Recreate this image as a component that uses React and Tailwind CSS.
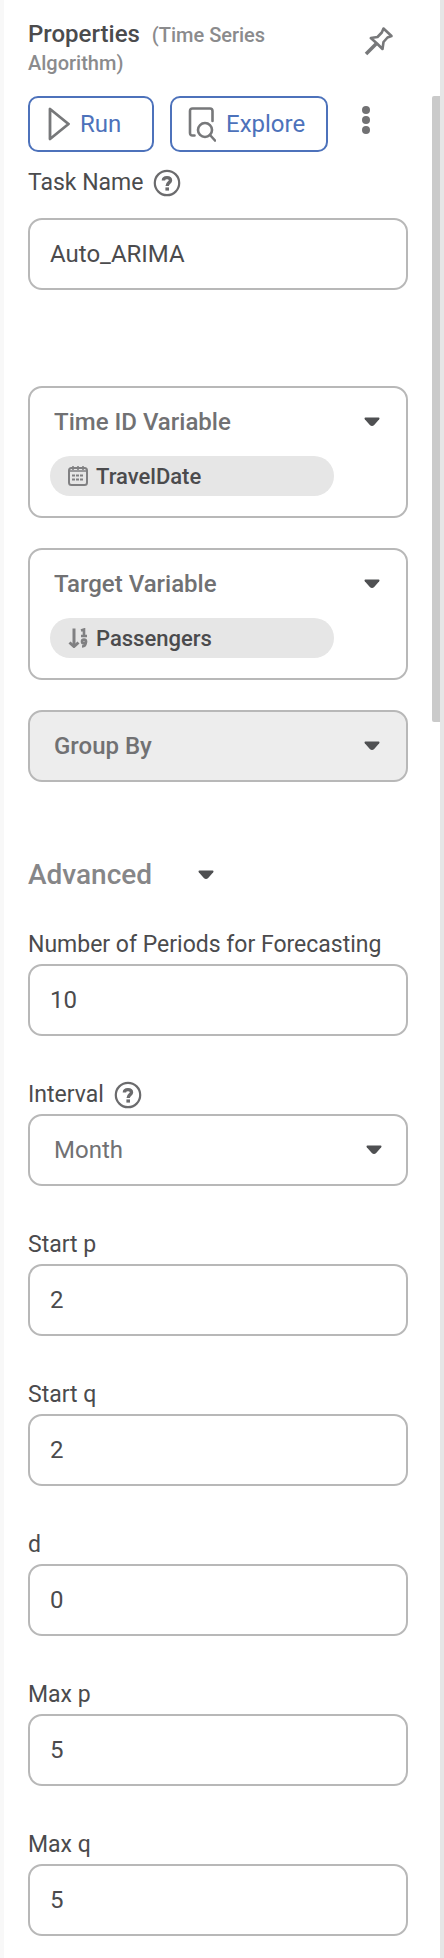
import React, { useState } from "react";

function Caret({ className = "" }) {
  return (
    <svg viewBox="0 0 16 10" className={"pointer-events-none h-[10px] w-4 shrink-0 fill-[#4f5052] " + className} aria-hidden="true">
      <path d="M1.4 0.5H14.6Q16 0.9 15.2 2.2L10.4 7.8Q8 10.2 5.6 7.8L0.8 2.2Q0 0.9 1.4 0.5Z" />
    </svg>
  );
}

function HelpIcon() {
  return (
    <svg viewBox="0 0 28 28" className="size-7 shrink-0" fill="none" stroke="#6b6b6d" aria-hidden="true">
      <circle cx="14" cy="14" r="12.2" strokeWidth="2.2" />
      <path d="M10.4 11.4C10.4 9.4 12 8.6 14 8.6C16.2 8.6 17.5 9.8 17.5 11.4C17.5 13.8 14.2 13.6 14.2 17" strokeWidth="3.4" />
      <path d="M14.2 18.4V21.6" strokeWidth="3.6" />
    </svg>
  );
}

function PinIcon() {
  return (
    <svg viewBox="0 0 30 30" className="size-[30px]" fill="none" stroke="#77787a" strokeWidth="2.6" strokeLinejoin="round" aria-hidden="true">
      <path d="M19.5 2.5L27.5 10L23.5 11.5L19.5 16L18.5 23L13 17.5L6.8 12L13.5 11L17.8 6.5Z" />
      <path d="M12.5 17.5L2 28" strokeWidth="3.6" />
    </svg>
  );
}

function CalendarIcon() {
  return (
    <svg viewBox="0 0 20 20" className="size-5 shrink-0" fill="none" stroke="#808082" strokeWidth="2" aria-hidden="true">
      <rect x="1" y="2" width="18" height="17" rx="2.5" />
      <path d="M1 5H19M5 0V4M10 0V4M15 0V4" strokeWidth="1.6" />
      <path d="M4 9.5H16M4 13.5H16" strokeWidth="2" strokeDasharray="3 1" />
    </svg>
  );
}

function NumericIcon() {
  return (
    <svg viewBox="0 0 20 20" className="size-5 shrink-0" fill="none" stroke="#808082" aria-hidden="true">
      <path d="M6 0.5V17" strokeWidth="3" />
      <path d="M1.5 14.5L6 18.5L10.5 14.5" strokeWidth="3" />
      <path d="M13 2.5L16 1.5V7.5M13 8H19" strokeWidth="2.6" />
      <circle cx="16" cy="13.5" r="1.9" strokeWidth="2.8" />
      <path d="M18 13.5C18 17 17 18.5 14 18.5" strokeWidth="2.4" />
    </svg>
  );
}

function Field({ id, label, help, gap = "mb-1", children }) {
  return (
    <div className="flex flex-col">
      <div className={"flex h-[30px] items-center gap-[10px] " + gap}>
        <label htmlFor={id} className="text-[23px] leading-[30px] text-[#4b4b4d]">{label}</label>
        {help && <HelpIcon />}
      </div>
      {children}
    </div>
  );
}

function TextInput({ id, initial }) {
  const [value, setValue] = useState(initial);
  return (
    <input
      id={id}
      type="text"
      value={value}
      onChange={(e) => setValue(e.target.value)}
      className="h-[72px] w-full rounded-[14px] border-2 border-[#b8b8b8] bg-white px-5 text-2xl text-[#4b4b4d] outline-none"
    />
  );
}

function VariablePicker({ label, options, disabled, icon, chip }) {
  return (
    <div className={"flex flex-col rounded-[14px] border-2 border-[#b8b8b8] " + (disabled ? "bg-[#ededed]" : "bg-white")}>
      <div className="relative flex h-[68px] items-center">
        <select
          aria-label={label}
          disabled={disabled}
          defaultValue=""
          className="h-full w-full appearance-none bg-transparent px-6 text-2xl font-medium text-[#717173] opacity-100 outline-none"
        >
          <option value="">{label}</option>
          {options.map((o) => <option key={o}>{o}</option>)}
        </select>
        <Caret className="absolute right-[26px]" />
      </div>
      {chip && (
        <div className="mr-[72px] mb-5 ml-5 flex h-10 items-center gap-2 rounded-full bg-[#e6e6e6] px-[18px] text-[22px] font-medium text-[#4b4b4d]">
          {icon}
          <span>{chip}</span>
        </div>
      )}
    </div>
  );
}

const parameters = [
  ["start-p", "Start p", "2"],
  ["start-q", "Start q", "2"],
  ["d", "d", "0"],
  ["max-p", "Max p", "5"],
  ["max-q", "Max q", "5"],
];

export default function App() {
  return (
    <div className="flex min-h-screen bg-white font-['Roboto',sans-serif]">
      <div className="w-1 shrink-0 bg-[#f8f8f8]" />
      <main className="flex min-w-0 flex-1 flex-col px-6 pt-5 pb-[22px]">
        <header className="flex items-start justify-between">
          <h1 className="w-64 text-2xl leading-7 font-medium text-[#4b4b4d]">
            Properties <span className="ml-[6px] text-[20px] leading-5 text-[#8b8b8d]">(Time Series Algorithm)</span>
          </h1>
          <button type="button" aria-label="Pin panel" className="mt-[6px] mr-[14px]">
            <PinIcon />
          </button>
        </header>

        <div className="mt-5 flex items-center">
          <button type="button" className="flex h-14 w-[126px] items-center gap-[10px] rounded-[10px] border-2 border-[#4d72bb] pl-[18px] text-2xl text-[#4d72bb]">
            <svg viewBox="0 0 22 34" className="h-[34px] w-[22px]" fill="none" stroke="#77787a" strokeWidth="2.8" strokeLinejoin="round" aria-hidden="true">
              <path d="M2 2V32L20.5 17Z" />
            </svg>
            Run
          </button>
          <button type="button" className="ml-4 flex h-14 w-[158px] items-center gap-[10px] rounded-[10px] border-2 border-[#4d72bb] pl-4 text-2xl text-[#4d72bb]">
            <svg viewBox="0 0 28 36" className="h-9 w-7" fill="none" stroke="#77787a" strokeWidth="2.6" strokeLinecap="round" strokeLinejoin="round" aria-hidden="true">
              <path d="M6.5 29.5H4.5Q2 29.5 2 27V5Q2 2.5 4.5 2.5H22Q24.5 2.5 24.5 5V15" />
              <circle cx="17" cy="24" r="7" />
              <path d="M22 29L27 34.5" />
            </svg>
            Explore
          </button>
          <button type="button" aria-label="More options" className="-mt-2 ml-[34px]">
            <svg viewBox="0 0 8 28" className="h-7 w-2 fill-[#717173]" aria-hidden="true">
              <circle cx="4" cy="4" r="4" />
              <circle cx="4" cy="14" r="4" />
              <circle cx="4" cy="24" r="4" />
            </svg>
          </button>
        </div>

        <div className="mt-4">
          <Field id="task-name" label="Task Name" help gap="mb-5">
            <TextInput id="task-name" initial="Auto_ARIMA" />
          </Field>
        </div>

        <div className="mt-24 flex flex-col gap-[30px]">
          <VariablePicker label="Time ID Variable" options={["TravelDate"]} icon={<CalendarIcon />} chip="TravelDate" />
          <VariablePicker label="Target Variable" options={["Passengers"]} icon={<NumericIcon />} chip="Passengers" />
          <VariablePicker label="Group By" options={[]} disabled />
        </div>

        <button type="button" className="mt-[75px] flex items-center gap-[46px] self-start text-[28px] leading-9 font-medium text-[#868688]">
          Advanced
          <Caret />
        </button>

        <div className="mt-[37px] flex flex-col gap-11">
          <Field id="periods" label="Number of Periods for Forecasting">
            <TextInput id="periods" initial="10" />
          </Field>
          <Field id="interval" label="Interval" help>
            <div className="relative flex items-center">
              <select
                id="interval"
                className="h-[72px] w-full appearance-none rounded-[14px] border-2 border-[#b8b8b8] bg-white px-6 text-2xl text-[#717173] outline-none"
              >
                <option>Month</option>
                <option>Day</option>
                <option>Week</option>
                <option>Year</option>
              </select>
              <Caret className="absolute right-[26px]" />
            </div>
          </Field>
          {parameters.map(([id, label, value]) => (
            <Field key={id} id={id} label={label}>
              <TextInput id={id} initial={value} />
            </Field>
          ))}
        </div>
      </main>
      <div className="w-2 shrink-0 pt-24">
        <div className="h-[626px] rounded-tl-xs rounded-bl-xs bg-[#cacaca]" />
      </div>
      <div className="w-1 shrink-0 bg-[#e6e6e6]" />
    </div>
  );
}
